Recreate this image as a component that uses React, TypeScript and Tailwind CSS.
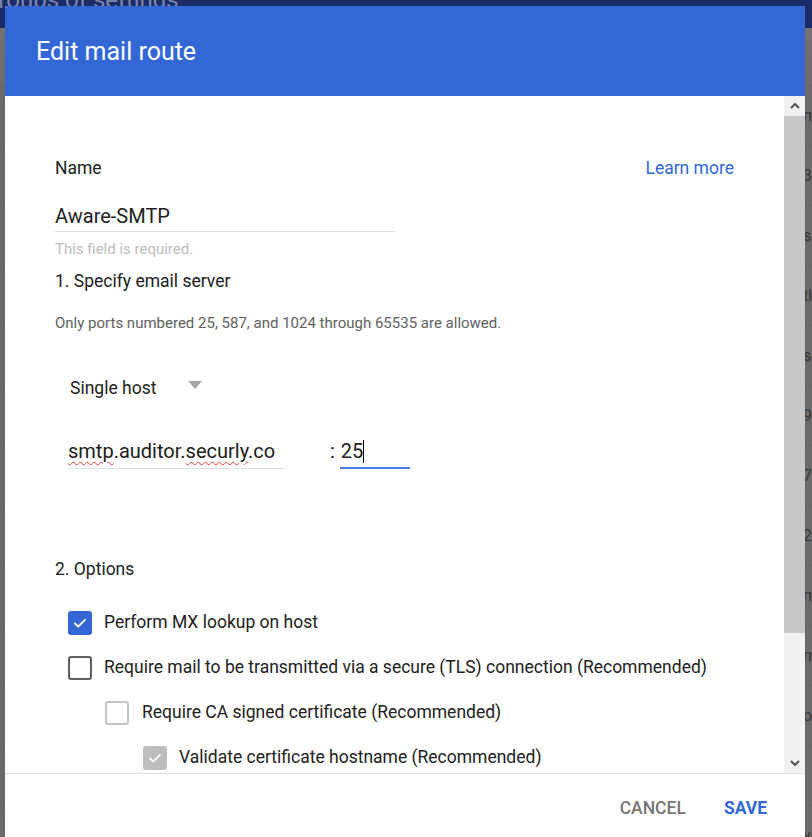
import React from "react";

const bgRows = ["mail", "3", "smtp", "tls", "sec", "9", "7", "2", "mail", "mail", "off", "", "yes"];

interface CheckProps {
  state: "checked" | "empty" | "faint" | "disabled";
}

const Check: React.FC<CheckProps> = ({ state }) => {
  if (state === "checked" || state === "disabled") {
    const bg = state === "checked" ? "bg-[#3367d6]" : "bg-[#bdbdbd]";
    return (
      <div className={`w-[24px] h-[24px] rounded-[3px] ${bg} flex items-center justify-center shrink-0`}>
        <svg width="16" height="16" viewBox="0 0 16 16" fill="none">
          <path d="M3 8.5l3.2 3.2L13 4.8" stroke="white" strokeWidth="1.8" strokeLinecap="round" strokeLinejoin="round" />
        </svg>
      </div>
    );
  }
  const border = state === "empty" ? "border-[#5f5f5f]" : "border-[#c4c4c4]";
  return <div className={`w-[24px] h-[24px] rounded-[3px] border-2 ${border} shrink-0`} />;
};

const App: React.FC = () => {
  return (
    <div className="relative w-[812px] h-[837px] overflow-hidden bg-[#737373] font-['Roboto',sans-serif]">
      {/* page behind the dialog, dimmed */}
      <div className="h-[40px] bg-[#1b2d68] text-[24px] leading-[24px] text-[#7d89ad] -mt-[12px]">
        <div className="-ml-[18px]">Groups of settings</div>
      </div>
      <div className="h-[58px] border-b border-[#6b6b6b] bg-[#757575]" />
      <div className="flex flex-col">
        {bgRows.map((t, i) => (
          <div key={i} className="h-[60px] border-b border-[#6b6b6b] flex items-center">
            <div className="w-[803px] shrink-0" />
            <span className="text-[16px] text-[#3c3c3c]">{t}</span>
          </div>
        ))}
      </div>

      {/* dialog */}
      <div className="absolute left-[5px] top-[6px] w-[800px] h-[860px] bg-white rounded-t-[2px] shadow-2xl flex flex-col">
        <div className="h-[90px] bg-[#3367d6] rounded-t-[2px] pl-[31px] pt-[2px] flex items-center shrink-0">
          <h1 className="text-[25px] text-white font-normal">Edit mail route</h1>
        </div>

        <div className="h-[677px] flex shrink-0">
          <div className="flex-1 overflow-hidden pl-[50px] pr-[50px] text-[#212121]">
            <div className="mt-[60px] flex justify-between items-center h-[24px] text-[17.5px]">
              <span>Name</span>
              <span className="text-[#3367d6]">Learn more</span>
            </div>
            <div className="mt-[21px] w-[340px] border-b border-[#e0e0e0] pt-[3px] pb-[3px] text-[20px] leading-[24px]">
              Aware-SMTP
            </div>
            <div className="mt-[9px] text-[15px] leading-[16px] text-[#bdbdbd]">This field is required.</div>
            <div className="mt-[12px] text-[17.5px] leading-[24px]">1. Specify email server</div>
            <div className="mt-[22px] text-[15px] leading-[16px] text-[#616161]">
              Only ports numbered 25, 587, and 1024 through 65535 are allowed.
            </div>
            <div className="mt-[45px] ml-[15px] flex items-center gap-[32px] h-[24px] text-[17.5px]">
              <span>Single host</span>
              <svg width="14" height="8" viewBox="0 0 14 8" className="-mt-[6px]">
                <path d="M0 0h14L7 8z" fill="#a6a6a6" />
              </svg>
            </div>
            <div className="mt-[39px] ml-[13px] flex items-end">
              <div className="w-[217px] border-b border-[#e0e0e0] pb-[5px] text-[20px] leading-[24px]">
                <span className="underline decoration-wavy decoration-[#e53935] decoration-1 underline-offset-[3px]">smtp</span>
                .auditor.
                <span className="underline decoration-wavy decoration-[#e53935] decoration-1 underline-offset-[3px]">securly</span>
                .co
              </div>
              <span className="ml-[45px] pb-[6px] text-[20px] leading-[24px]">:</span>
              <div className="ml-[5px] w-[70px] border-b-2 border-[#4a80e0] pb-[4px] pl-[1px] text-[20px] leading-[24px] flex items-center">
                <span>25</span>
                <span className="w-px h-[23px] bg-black" />
              </div>
            </div>
            <div className="mt-[88px] text-[17.5px] leading-[24px]">2. Options</div>
            <div className="mt-[19px] flex flex-col text-[17.5px]">
              <div className="h-[45px] flex items-center ml-[13px] gap-[12px]">
                <Check state="checked" />
                <span>Perform MX lookup on host</span>
              </div>
              <div className="h-[45px] flex items-center ml-[13px] gap-[12px]">
                <Check state="empty" />
                <span>Require mail to be transmitted via a secure (TLS) connection (Recommended)</span>
              </div>
              <div className="h-[45px] flex items-center ml-[50px] gap-[13px]">
                <Check state="faint" />
                <span>Require CA signed certificate (Recommended)</span>
              </div>
              <div className="h-[45px] flex items-center ml-[88px] gap-[12px]">
                <Check state="disabled" />
                <span>Validate certificate hostname (Recommended)</span>
              </div>
            </div>
          </div>

          {/* scrollbar */}
          <div className="w-[21px] bg-[#f1f1f1] flex flex-col shrink-0">
            <div className="h-[20px] flex items-center justify-center">
              <svg width="10" height="6" viewBox="0 0 10 6">
                <path d="M1 5l4-4 4 4" stroke="#505050" strokeWidth="2" fill="none" />
              </svg>
            </div>
            <div className="h-[517px] bg-[#c8c8c8]" />
            <div className="flex-1" />
            <div className="h-[20px] flex items-center justify-center">
              <svg width="10" height="6" viewBox="0 0 10 6">
                <path d="M1 1l4 4 4-4" stroke="#505050" strokeWidth="2" fill="none" />
              </svg>
            </div>
          </div>
        </div>

        <div className="border-t border-[#e0e0e0] h-[70px] flex items-center justify-end pr-[38px] gap-[38px] text-[17.5px] font-medium">
          <button className="text-[#757575]">CANCEL</button>
          <button className="text-[#3367d6] font-bold">SAVE</button>
        </div>
      </div>
    </div>
  );
};

export default App;
